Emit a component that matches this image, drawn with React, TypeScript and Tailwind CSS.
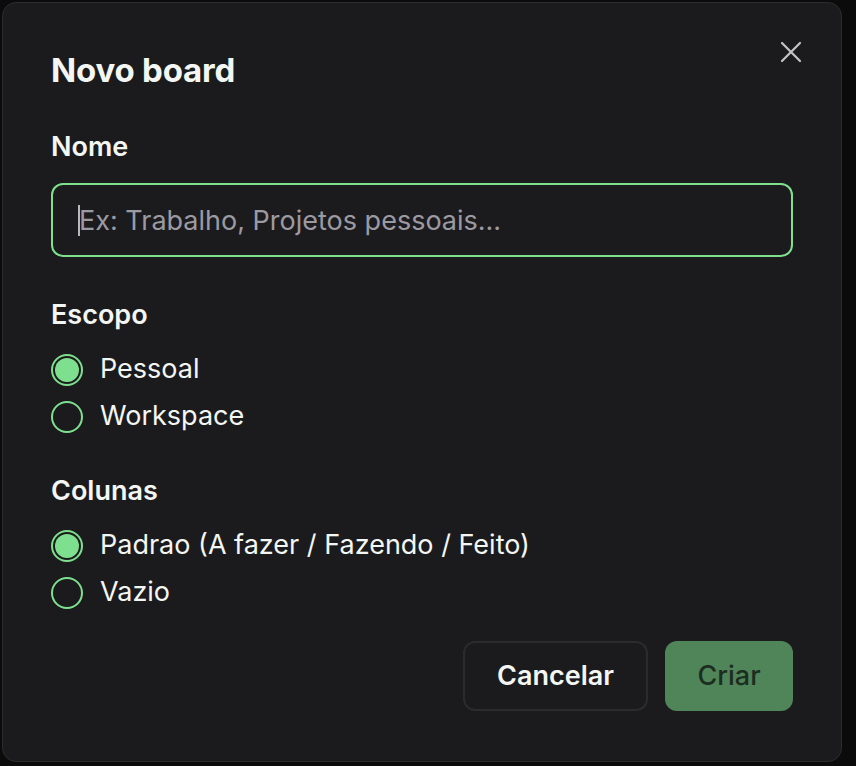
import React, { useState } from "react";

const font = { fontFamily: "Inter, 'Noto Sans', sans-serif" };

interface Option {
  id: string;
  label: string;
}

const scopeOptions: Option[] = [
  { id: "pessoal", label: "Pessoal" },
  { id: "workspace", label: "Workspace" },
];

const columnOptions: Option[] = [
  { id: "padrao", label: "Padrao (A fazer / Fazendo / Feito)" },
  { id: "vazio", label: "Vazio" },
];

const RadioGroup: React.FC<{
  name: string;
  options: Option[];
  value: string;
  onChange: (v: string) => void;
}> = ({ name, options, value, onChange }) => (
  <div className="flex flex-col">
    {options.map((opt) => (
      <label
        key={opt.id}
        className="flex h-[47px] cursor-pointer items-center gap-[17px]"
      >
        <input
          type="radio"
          name={name}
          checked={value === opt.id}
          onChange={() => onChange(opt.id)}
          className="sr-only"
        />
        <span className="flex h-8 w-8 items-center justify-center rounded-full border-2 border-[#7ee08f]">
          {value === opt.id && (
            <span className="h-[24px] w-[24px] rounded-full bg-[#7ee08f]" />
          )}
        </span>
        <span className="text-[27px] text-[#f3f6f3]">{opt.label}</span>
      </label>
    ))}
  </div>
);

export default function App() {
  const [scope, setScope] = useState("pessoal");
  const [columns, setColumns] = useState("padrao");
  const [name, setName] = useState("");

  return (
    <div className="h-[766px] w-[856px] bg-[#0b0b0c] pl-[2px] pt-[2px]" style={font}>
      <div className="relative flex h-[760px] w-[840px] flex-col rounded-[14px] border border-[#2c2c2f] bg-[#1b1b1d] px-[48px] pt-[47px]">
        <button className="absolute right-[38px] top-[37px] text-[#c4c4c4]">
          <svg width="24" height="24" viewBox="0 0 24 24" fill="none" stroke="currentColor" strokeWidth="2.2" strokeLinecap="round">
            <path d="M3 3l18 18M21 3L3 21" />
          </svg>
        </button>

        <h2 className="text-[33px] font-bold leading-[40px] tracking-[-0.2px] text-[#f3f6f3]">
          Novo board
        </h2>

        <label className="mt-[41px] text-[27px] font-semibold leading-[32px] text-[#f3f6f3]">
          Nome
        </label>
        <div className="relative mt-[20px]">
          <input
            autoFocus
            value={name}
            onChange={(e) => setName(e.target.value)}
            placeholder="Ex: Trabalho, Projetos pessoais..."
            className="h-[74px] w-full rounded-[12px] border-2 border-[#7ee08f] bg-transparent px-[26px] text-[27px] text-[#f3f6f3] caret-[#d0d0d0] outline-none placeholder:text-[#9b9aa3]"
          />
          {!name && (
            <span className="pointer-events-none absolute left-[27px] top-[22px] h-[31px] w-[2px] bg-[#b8b8bc]" />
          )}
        </div>

        <div className="mt-[42px] text-[27px] font-semibold leading-[32px] text-[#f3f6f3]">
          Escopo
        </div>
        <div className="mt-[15px]">
          <RadioGroup name="scope" options={scopeOptions} value={scope} onChange={setScope} />
        </div>

        <div className="mt-[35px] text-[27px] font-semibold leading-[32px] text-[#f3f6f3]">
          Colunas
        </div>
        <div className="mt-[15px]">
          <RadioGroup name="columns" options={columnOptions} value={columns} onChange={setColumns} />
        </div>

        <div className="mt-[25px] flex justify-end gap-[17px]">
          <button className="h-[70px] w-[185px] rounded-[12px] border-2 border-[#2b2b2e] text-[27px] font-semibold text-[#f3f6f3]">
            Cancelar
          </button>
          <button
            aria-disabled={!name}
            className="h-[70px] w-[128px] rounded-[12px] bg-[#4f8559] text-[27px] font-medium text-[#1d2d21]"
          >
            Criar
          </button>
        </div>
      </div>
    </div>
  );
}
